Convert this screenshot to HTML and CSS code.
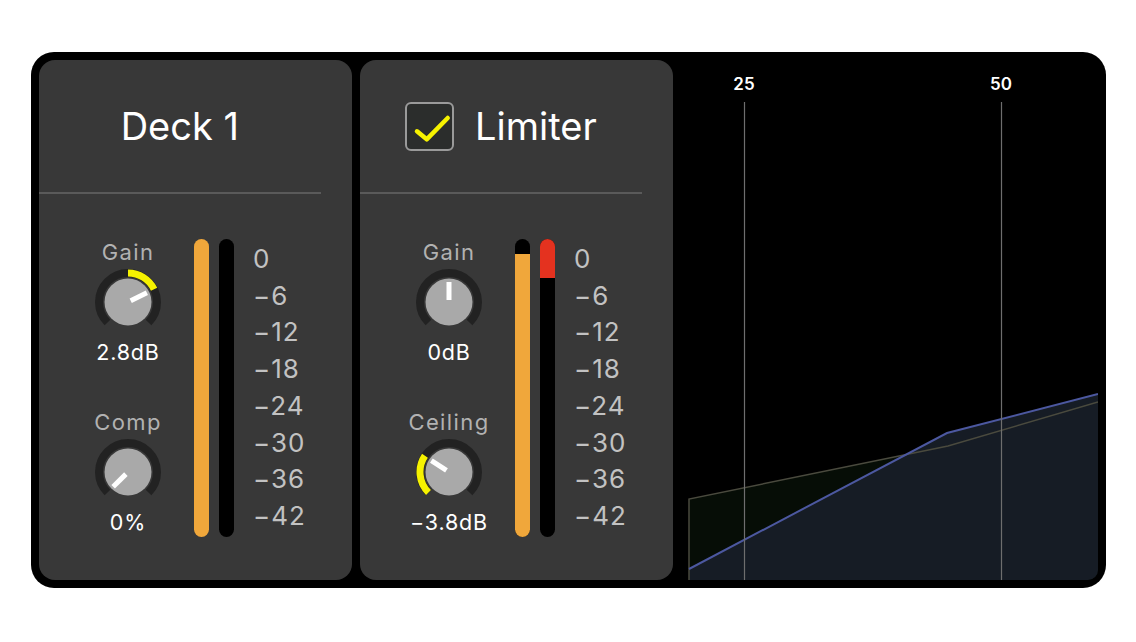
FILE: index.html
```html
<!DOCTYPE html>
<html lang="en">
<head>
<meta charset="utf-8">
<title>Deck 1 · Limiter</title>
<link rel="stylesheet" href="styles.css">
</head>
<body>
<div class="rack">
  <section class="panel">
    <header class="panel-head">
      <h1 class="panel-title">Deck 1</h1>
    </header>
    <div class="panel-body">
      <div class="knobs">
        <div class="knob-group">
          <div class="knob-label">Gain</div>
          <svg class="knob" viewBox="0 0 66 66" width="66" height="66">
            <path class="knob-track" d="M12.49 53.51 A29 29 0 1 1 53.51 53.51"/>
            <path class="knob-value" d="M33 4 A29 29 0 0 1 59.07 20.29"/>
            <circle class="knob-cap" cx="33" cy="33" r="23.5"/>
            <line class="knob-pointer" x1="33" y1="30" x2="33" y2="12" transform="rotate(64 33 33)"/>
          </svg>
          <div class="knob-readout">2.8dB</div>
        </div>
        <div class="knob-group">
          <div class="knob-label">Comp</div>
          <svg class="knob" viewBox="0 0 66 66" width="66" height="66">
            <path class="knob-track" d="M12.49 53.51 A29 29 0 1 1 53.51 53.51"/>
            <circle class="knob-cap" cx="33" cy="33" r="23.5"/>
            <line class="knob-pointer" x1="33" y1="30" x2="33" y2="12" transform="rotate(-135 33 33)"/>
          </svg>
          <div class="knob-readout">0%</div>
        </div>
      </div>
      <div class="meters">
        <div class="meter"><div class="meter-fill level" style="height:298px"></div></div>
        <div class="meter"></div>
      </div>
      <ul class="scale">
        <li>0</li><li>−6</li><li>−12</li><li>−18</li><li>−24</li><li>−30</li><li>−36</li><li>−42</li>
      </ul>
    </div>
  </section>

  <section class="panel">
    <header class="panel-head">
      <span class="check" role="checkbox" aria-checked="true">
        <svg viewBox="0 0 49 49" width="49" height="49">
          <path d="M12 29.3 L21.7 37.3 L42.7 16" />
        </svg>
      </span>
      <h1 class="panel-title">Limiter</h1>
    </header>
    <div class="panel-body">
      <div class="knobs">
        <div class="knob-group">
          <div class="knob-label">Gain</div>
          <svg class="knob" viewBox="0 0 66 66" width="66" height="66">
            <path class="knob-track" d="M12.49 53.51 A29 29 0 1 1 53.51 53.51"/>
            <circle class="knob-cap" cx="33" cy="33" r="23.5"/>
            <line class="knob-pointer" x1="33" y1="31" x2="33" y2="13"/>
          </svg>
          <div class="knob-readout">0dB</div>
        </div>
        <div class="knob-group">
          <div class="knob-label">Ceiling</div>
          <svg class="knob" viewBox="0 0 66 66" width="66" height="66">
            <path class="knob-track" d="M12.49 53.51 A29 29 0 1 1 53.51 53.51"/>
            <path class="knob-value" d="M12.49 53.51 A29 29 0 0 1 8.96 16.78"/>
            <circle class="knob-cap" cx="33" cy="33" r="23.5"/>
            <line class="knob-pointer" x1="33" y1="30" x2="33" y2="12" transform="rotate(-57 33 33)"/>
          </svg>
          <div class="knob-readout">−3.8dB</div>
        </div>
      </div>
      <div class="meters">
        <div class="meter meter-bottom"><div class="meter-fill level" style="height:283px"></div></div>
        <div class="meter"><div class="meter-fill clip" style="height:39px"></div></div>
      </div>
      <ul class="scale">
        <li>0</li><li>−6</li><li>−12</li><li>−18</li><li>−24</li><li>−30</li><li>−36</li><li>−42</li>
      </ul>
    </div>
  </section>

  <div class="graph">
    <svg viewBox="0 0 417 520" width="417" height="520">
      <polygon class="area-in" points="8,439 267,386 417,342 417,520 8,520"/>
      <polygon class="area-out" points="8,509 266,373 417,334 417,520 8,520"/>
      <polyline class="line-in" points="8,520 8,439 267,386 417,342"/>
      <polyline class="line-out" points="8,509 266,373 417,334"/>
      <line class="grid" x1="63.5" y1="42" x2="63.5" y2="520"/>
      <line class="grid" x1="320.5" y1="42" x2="320.5" y2="520"/>
      <text class="grid-label" x="63" y="30">25</text>
      <text class="grid-label" x="320" y="30">50</text>
    </svg>
  </div>
</div>
</body>
</html>
```

FILE: styles.css
```css
* {
  box-sizing: border-box;
}

body {
  margin: 0;
  background: #ffffff;
  font-family: Inter, "Noto Sans", sans-serif;
}

.rack {
  margin: 52px 0 0 31px;
  width: 1075px;
  height: 536px;
  padding: 8px;
  display: flex;
  gap: 8px;
  background: #000000;
  border-radius: 23px;
}

.panel {
  width: 313px;
  flex: none;
  background: #383838;
  border-radius: 16px;
  display: flex;
  flex-direction: column;
}

.panel-head {
  width: 90%;
  height: 134px;
  flex: none;
  border-bottom: 2px solid #5a5a5a;
  display: flex;
  align-items: center;
  justify-content: center;
  gap: 21px;
}

.panel-title {
  margin: 0;
  font-size: 38px;
  font-weight: 400;
  color: #ffffff;
  line-height: 1;
}

.check {
  width: 49px;
  height: 49px;
  border: 2px solid #9a9a9a;
  border-radius: 6px;
  background: #2b2d2c;
  display: block;
  position: relative;
}

.check svg {
  position: absolute;
  left: -2px;
  top: -2px;
}

.check path {
  fill: none;
  stroke: #f6f200;
  stroke-width: 4.5;
  stroke-linecap: round;
  stroke-linejoin: round;
}

.panel-body {
  flex: 1;
  display: flex;
  align-items: flex-start;
  padding: 45px 0 0 44px;
}

.knobs {
  width: 90px;
  display: flex;
  flex-direction: column;
  gap: 44px;
}

.knob-group {
  display: flex;
  flex-direction: column;
  align-items: center;
  gap: 4px;
}

.knob-label {
  font-size: 22px;
  line-height: 26px;
  letter-spacing: 1.4px;
  color: #b2b2b2;
  white-space: nowrap;
}

.knob-readout {
  font-size: 21.5px;
  line-height: 26px;
  letter-spacing: 0.8px;
  color: #ffffff;
  white-space: nowrap;
}

.knob {
  display: block;
}

.knob-track {
  fill: none;
  stroke: #222222;
  stroke-width: 8;
}

.knob-value {
  fill: none;
  stroke: #f6f200;
  stroke-width: 7;
}

.knob-cap {
  fill: #a9a9a9;
}

.knob-pointer {
  stroke: #ffffff;
  stroke-width: 5;
}

.meters {
  margin-left: 21px;
  display: flex;
  gap: 10px;
}

.meter {
  width: 15px;
  height: 298px;
  background: #000000;
  border-radius: 8px;
  overflow: hidden;
  display: flex;
  flex-direction: column;
}

.meter-bottom {
  justify-content: flex-end;
}

.meter-fill {
  flex: none;
}

.level {
  background: #f0a73b;
}

.clip {
  background: #e4321f;
}

.scale {
  list-style: none;
  margin: 2px 0 0 19px;
  padding: 0;
  font-size: 26px;
  line-height: 36.7px;
  letter-spacing: 1px;
  color: #c2c2c2;
}

.graph {
  flex: 1;
  background: #000000;
  border-radius: 0 0 10px 0;
  overflow: hidden;
}

.graph svg {
  display: block;
}

.area-in {
  fill: #060d06;
}

.area-out {
  fill: #161c25;
}

.line-in {
  fill: none;
  stroke: #4a4a3e;
  stroke-width: 1.5;
}

.line-out {
  fill: none;
  stroke: #4c58a0;
  stroke-width: 2;
}

.grid {
  stroke: #6e6e6e;
  stroke-width: 1.2;
}

.grid-label {
  font-family: Inter, "Liberation Sans", sans-serif;
  font-size: 17px;
  font-weight: 600;
  fill: #ffffff;
  text-anchor: middle;
}
```
